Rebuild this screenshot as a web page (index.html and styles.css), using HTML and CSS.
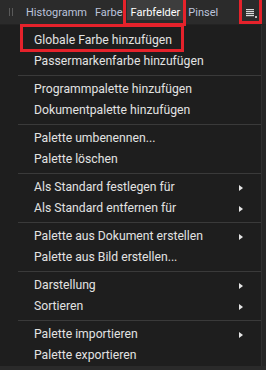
FILE: index.html
```html
<!DOCTYPE html>
<html>
<head>
<meta charset="utf-8">
<link rel="stylesheet" href="styles.css">
</head>
<body>
<div class="panel">
  <div class="tabbar">
    <span class="grip"><i></i><i></i></span>
    <span class="tab">Histogramm</span>
    <span class="tab">Farbe</span>
    <span class="tab active">Farbfelder</span>
    <span class="tab">Pinsel</span>
    <span class="menubtn">
      <svg width="12" height="10" viewBox="0 0 12 10">
        <rect x="0" y="0" width="8" height="1.2" fill="#d8d8d8"/>
        <rect x="0" y="2" width="8" height="1.2" fill="#d8d8d8"/>
        <rect x="0" y="4" width="8" height="1.2" fill="#d8d8d8"/>
        <rect x="0" y="6" width="8" height="1.2" fill="#d8d8d8"/>
        <rect x="9" y="7" width="2" height="2" fill="#bbbbbb"/>
      </svg>
    </span>
  </div>
  <div class="body">
    <div class="menu">
      <div class="item">Globale Farbe hinzufügen</div>
      <div class="item">Passermarkenfarbe hinzufügen</div>
      <div class="sep"></div>
      <div class="item">Programmpalette hinzufügen</div>
      <div class="item">Dokumentpalette hinzufügen</div>
      <div class="sep"></div>
      <div class="item">Palette umbenennen...</div>
      <div class="item">Palette löschen</div>
      <div class="sep"></div>
      <div class="item sub">Als Standard festlegen für<span class="arrow"></span></div>
      <div class="item sub">Als Standard entfernen für<span class="arrow"></span></div>
      <div class="sep"></div>
      <div class="item sub">Palette aus Dokument erstellen<span class="arrow"></span></div>
      <div class="item">Palette aus Bild erstellen...</div>
      <div class="sep"></div>
      <div class="item sub">Darstellung<span class="arrow"></span></div>
      <div class="item sub">Sortieren<span class="arrow"></span></div>
      <div class="sep"></div>
      <div class="item sub">Palette importieren<span class="arrow"></span></div>
      <div class="item">Palette exportieren</div>
    </div>
    <div class="scroll"></div>
  </div>
  <div class="bottom"></div>
</div>
<div class="mark mark-tab"></div>
<div class="mark mark-btn"></div>
<div class="mark mark-item"></div>
</body>
</html>
```

FILE: styles.css
```css
html, body {
  margin: 0;
  padding: 0;
}
body {
  width: 266px;
  height: 370px;
  overflow: hidden;
  background: #1e1e1e;
  font-family: Roboto, "Noto Sans", sans-serif;
  position: relative;
}
.panel {
  display: flex;
  flex-direction: column;
  height: 370px;
}
.tabbar {
  height: 24px;
  background: #2b2b2b;
  border-bottom: 1px solid #232323;
  display: flex;
  align-items: flex-start;
  font-size: 11px;
  color: #bcc3db;
}
.grip {
  display: flex;
  gap: 2px;
  margin-left: 9px;
  margin-right: 9px;
  margin-top: 8px;
}
.grip i {
  display: block;
  width: 1px;
  height: 8px;
  background: #5a5a5a;
}
.tab {
  padding: 6px 4px 0 4px;
  line-height: 14px;
}
.tab.active {
  background: #3d3d3d;
  color: #ffffff;
}
.menubtn {
  margin-left: auto;
  margin-right: 8px;
  display: flex;
  padding-top: 9px;
}
.body {
  flex: 1;
  display: flex;
}
.menu {
  flex: 1;
  padding-top: 5px;
  color: #e2e2e2;
  font-size: 12.2px;
}
.item {
  height: 21px;
  line-height: 21px;
  padding-left: 34px;
  padding-right: 18px;
  display: flex;
  align-items: center;
  justify-content: space-between;
  white-space: nowrap;
}
.arrow {
  width: 0;
  height: 0;
  border-left: 4px solid #e6e6e6;
  border-top: 3px solid transparent;
  border-bottom: 3px solid transparent;
}
.sep {
  height: 1px;
  background: #3a3a3a;
  margin: 3px 0 3px 18px;
}
.scroll {
  width: 4px;
  background: #252525;
  border-left: 1px solid #2f2f2f;
}
.bottom {
  height: 4px;
  background: #2a2a2a;
}
.mark {
  position: absolute;
  border: 3px solid #e5222b;
  box-sizing: border-box;
}
.mark-tab {
  left: 123px;
  top: -3px;
  width: 63px;
  height: 29px;
}
.mark-btn {
  left: 239px;
  top: -3px;
  width: 23px;
  height: 27px;
}
.mark-item {
  left: 20px;
  top: 24px;
  width: 164px;
  height: 28px;
}
```
